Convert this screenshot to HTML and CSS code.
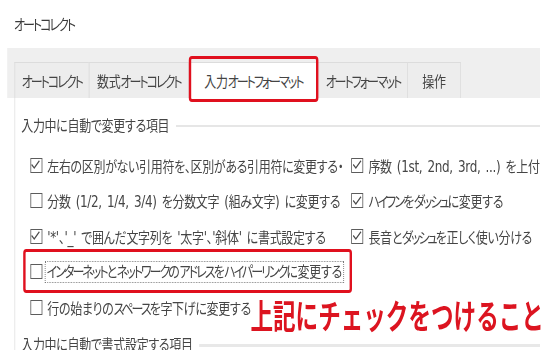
FILE: index.html
```html
<!DOCTYPE html>
<html lang="ja">
<head>
<meta charset="utf-8">
<title>オートコレクト</title>
<link rel="stylesheet" href="styles.css">
</head>
<body>
<div class="page">
  <div class="title"><span class="k">オートコレクト</span></div>
  <div class="dialog">
    <div class="tabbar">
      <div class="tab t1"><span class="k">オートコレクト</span></div>
      <div class="tab t2">数式<span class="k">オートコレクト</span></div>
      <div class="tab t3 active">入力<span class="k">オートフォーマット</span></div>
      <div class="tab t4"><span class="k">オートフォーマット</span></div>
      <div class="tab t5">操作</div>
    </div>
    <div class="panel">
      <div class="group-head"><span>入力中に自動で変更する項目</span></div>
      <div class="options">
        <div class="opt"><span class="cb"><svg viewBox="0 0 15 15"><path d="M2.5 7.5 L5.8 11 L12.2 3.8"/></svg></span><span>左右の区別がない引用符を、区別がある引用符に変更する・</span></div>
        <div class="opt"><span class="cb"><svg viewBox="0 0 15 15"><path d="M2.5 7.5 L5.8 11 L12.2 3.8"/></svg></span><span>序数 (1st, 2nd, 3rd, ...) を上付</span></div>
        <div class="opt"><span class="cb"></span><span>分数 (1/2, 1/4, 3/4) を分数文字 (組み文字) に変更する</span></div>
        <div class="opt"><span class="cb"><svg viewBox="0 0 15 15"><path d="M2.5 7.5 L5.8 11 L12.2 3.8"/></svg></span><span><span class="k">ハイフン</span>を<span class="k">ダッシュ</span>に変更する</span></div>
        <div class="opt"><span class="cb"><svg viewBox="0 0 15 15"><path d="M2.5 7.5 L5.8 11 L12.2 3.8"/></svg></span><span>'*'、'_' で囲んだ文字列を '太字'、'斜体' に書式設定する</span></div>
        <div class="opt"><span class="cb"><svg viewBox="0 0 15 15"><path d="M2.5 7.5 L5.8 11 L12.2 3.8"/></svg></span><span>長音と<span class="k">ダッシュ</span>を正しく使い分ける</span></div>
        <div class="opt hl"><span class="cb"></span><span class="focus"><span class="k">インターネット</span>と<span class="k">ネットワーク</span>の<span class="k">アドレス</span>を<span class="k">ハイパーリンク</span>に変更する</span></div>
        <div class="opt empty"></div>
        <div class="opt"><span class="cb"></span><span>行の始まりの<span class="k">スペース</span>を字下げに変更する</span></div>
      </div>
      <div class="group-head second"><span>入力中に自動で書式設定する項目</span></div>
    </div>
  </div>
  <div class="note">上記にチェックをつけること</div>
</div>
</body>
</html>
```

FILE: styles.css
```css
html, body {
  margin: 0;
  padding: 0;
  background: #ffffff;
  overflow: hidden;
}
body {
  width: 550px;
  height: 350px;
  font-family: "DejaVu Sans", "Noto Sans CJK JP", sans-serif;
}
.page {
  position: relative;
  width: 687.5px;
  height: 350px;
  overflow: hidden;
  transform: scaleX(0.8);
  transform-origin: 0 0;
  font-size: 15px;
  color: #454545;
  letter-spacing: -0.4px;
  word-spacing: 2px;
  font-feature-settings: "palt";
}
.k {
  letter-spacing: -2.5px;
}
.title {
  height: 48px;
  box-sizing: border-box;
  padding: 15px 0 0 17.5px;
  line-height: 20px;
  color: #3a3a3a;
}
.dialog {
  margin-left: 9px;
  width: 666px;
}
.tabbar {
  height: 50px;
  box-sizing: border-box;
  padding: 14px 0 0 8.5px;
  background: #efefef;
  display: flex;
  align-items: stretch;
}
.tab {
  height: 36px;
  box-sizing: border-box;
  display: flex;
  align-items: center;
  justify-content: center;
  background: #ededed;
  border: 1px solid #dcdcdc;
  border-bottom: none;
  margin-right: -1px;
  color: #444;
  white-space: nowrap;
}
.t1 { width: 94.5px; }
.t2 { width: 125px; }
.t3 { width: 163.5px; }
.t4 { width: 112.5px; }
.t5 { width: 67px; }
.tab.active {
  position: relative;
  background: #ffffff;
  z-index: 2;
}
.tab.active::after {
  content: "";
  position: absolute;
  left: 0;
  right: 0;
  top: -7px;
  bottom: -4px;
  border-style: solid;
  border-color: #e0101e;
  border-width: 3px 3.75px;
  border-radius: 4px;
}
.panel {
  margin-left: 8.5px;
  height: 252px;
  box-sizing: border-box;
  border-left: 1px solid #e2e2e2;
  padding: 18px 0 0 8px;
  background: #ffffff;
}
.group-head {
  display: flex;
  align-items: center;
  gap: 8px;
  height: 20px;
  line-height: 20px;
  white-space: nowrap;
}
.group-head::after {
  content: "";
  flex: 1;
  height: 2px;
  background: #e6e6e6;
}
.group-head.second {
  margin-top: 10.5px;
}
.group-head.second::after {
  height: 3px;
  background: #e8e8e8;
}
.options {
  display: grid;
  grid-template-columns: 401.5px 1fr;
  grid-auto-rows: 35.5px;
  margin: 11.25px 0 0 11px;
}
.opt {
  display: flex;
  align-items: center;
  gap: 6.5px;
  white-space: nowrap;
}
.cb {
  width: 15px;
  height: 15px;
  box-sizing: border-box;
  border: 1.5px solid #5c5c5c;
  background: #ffffff;
  flex: none;
  display: flex;
}
.cb svg {
  margin: -1.5px;
  width: 15px;
  height: 15px;
}
.cb svg path {
  fill: none;
  stroke: #4a4a4a;
  stroke-width: 1.4;
}
.opt.hl {
  position: relative;
  gap: 4px;
}
.opt.hl::after {
  content: "";
  position: absolute;
  left: -8.75px;
  width: 405px;
  top: -4.75px;
  bottom: -3.75px;
  border-style: solid;
  border-color: #e0101e;
  border-width: 3px 3.75px;
  border-radius: 4px;
}
.focus {
  outline: 1px dotted #7a7a7a;
  padding: 0 2px;
  line-height: 20px;
}
.note {
  position: absolute;
  left: 312.5px;
  top: 298px;
  font-family: "Noto Sans CJK JP", sans-serif;
  font-size: 34px;
  line-height: 34px;
  font-weight: 700;
  letter-spacing: 0;
  word-spacing: 0;
  color: #dc1420;
  white-space: nowrap;
  transform: scaleX(0.83);
  transform-origin: 0 0;
  font-feature-settings: normal;
}
```
